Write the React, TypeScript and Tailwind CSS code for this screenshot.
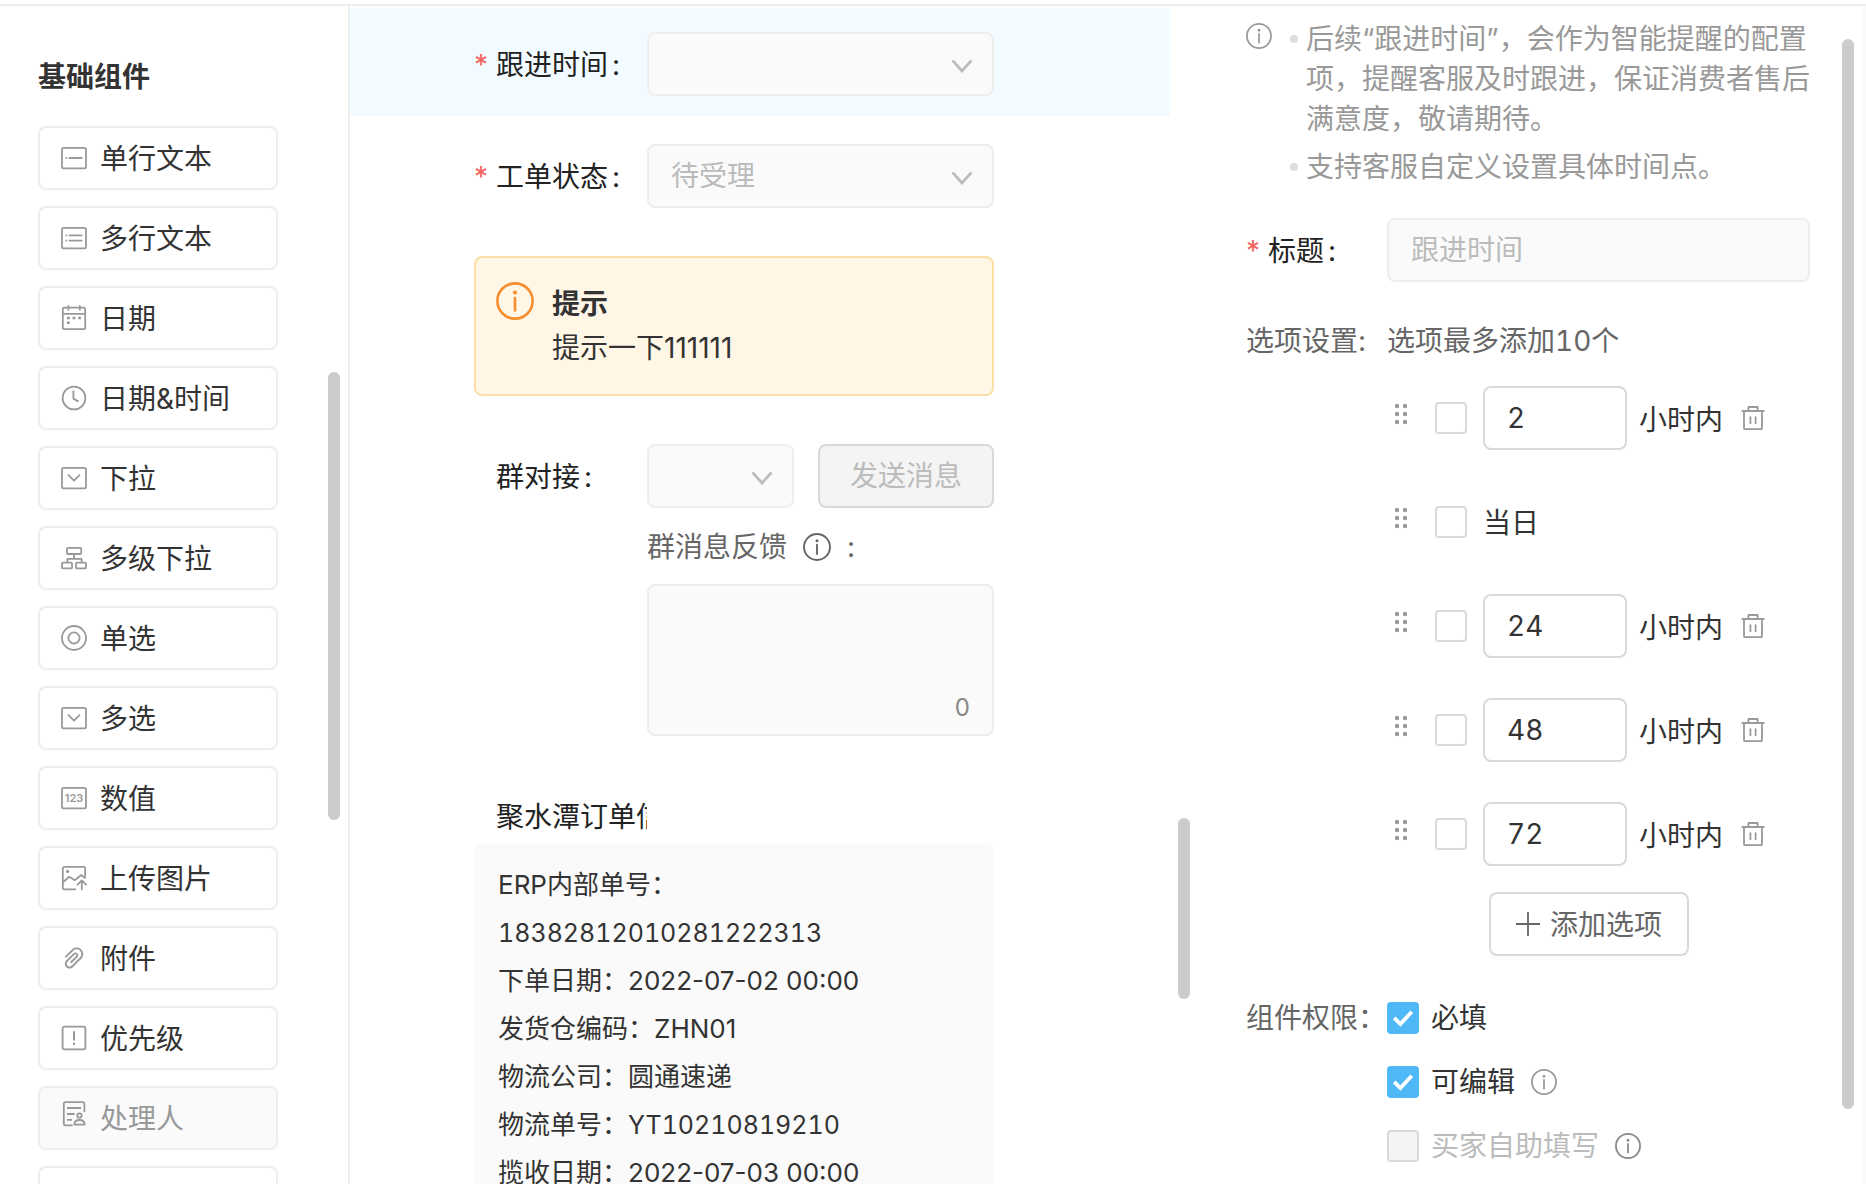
import React, { useState } from "react";
import { AiOutlinePaperClip } from "react-icons/ai";

interface WidgetItem {
    label: string;
    icon: React.ReactNode;
    disabled?: boolean;
}

interface TimeOption {
    id: string;
    hours: string | null;
    label: string;
}

interface OrderRow {
    name: string;
    value: string;
}

function Glyph({ children }: { children: React.ReactNode }) {
    return (
        <svg
            viewBox="0 0 28 28"
            className="h-7 w-7 shrink-0 overflow-visible text-[#999]"
            fill="none"
            stroke="currentColor"
            strokeWidth="1.8"
            strokeLinejoin="round"
            aria-hidden="true"
        >
            {children}
        </svg>
    );
}

const boxFrame = <rect x="2" y="3.8" width="24" height="20.6" rx="1.6" />;

const widgets: WidgetItem[] = [
    {
        label: "单行文本",
        icon: <Glyph>{boxFrame}<path d="M5.5 14H7M8.6 14H22.4" /></Glyph>,
    },
    {
        label: "多行文本",
        icon: <Glyph>{boxFrame}<path d="M5.5 11.4H7M8.6 11.4H22.4M5.5 16.6H7M8.6 16.6H22.4" /></Glyph>,
    },
    {
        label: "日期",
        icon: (
            <Glyph>
                <rect x="2.8" y="3.6" width="22.4" height="21.6" rx="1.6" />
                <path d="M2.8 9.8H25.2M8.4 1.2V6.4M19.8 1.2V6.4" />
                <path d="M7 14H9.8M12.6 14H15.4M18.2 14H21M7 18.8H9.8" strokeWidth="2.6" />
            </Glyph>
        ),
    },
    {
        label: "日期&时间",
        icon: <Glyph><circle cx="14" cy="14" r="11.4" /><path d="M13.4 6.6V14.6L18.6 17.6" /></Glyph>,
    },
    {
        label: "下拉",
        icon: <Glyph>{boxFrame}<path d="M8 10.6L14 16.6L20 10.6" /></Glyph>,
    },
    {
        label: "多级下拉",
        icon: (
            <Glyph>
                <rect x="7" y="3.8" width="14.2" height="6.2" rx="1" />
                <path d="M14 10V14.8M7.4 18.4V14.8H21.6V18.4" />
                <rect x="2" y="18.6" width="10" height="5.8" rx="1" />
                <rect x="16" y="18.6" width="10" height="5.8" rx="1" />
            </Glyph>
        ),
    },
    {
        label: "单选",
        icon: <Glyph><circle cx="14" cy="14" r="12" /><circle cx="14" cy="14" r="5.6" /></Glyph>,
    },
    {
        label: "多选",
        icon: <Glyph>{boxFrame}<path d="M8 10.6L14 16.6L20 10.6" /></Glyph>,
    },
    {
        label: "数值",
        icon: (
            <Glyph>
                {boxFrame}
                <text x="14" y="18" textAnchor="middle" fontSize="11" fontWeight="600" fill="currentColor" stroke="none">123</text>
            </Glyph>
        ),
    },
    {
        label: "上传图片",
        icon: (
            <Glyph>
                <path d="M16 25.4H4.6A1.8 1.8 0 0 1 2.8 23.6V4.6A1.8 1.8 0 0 1 4.6 2.8H23.4A1.8 1.8 0 0 1 25.2 4.6V14" />
                <path d="M3 18.2L9.2 12.8L14.8 16.2L21.2 11L25.2 14.2" />
                <circle cx="7.6" cy="7.4" r="1.6" fill="currentColor" stroke="none" />
                <path d="M21.8 26V16.6M17 21.2L21.8 16.4L26.6 21.2" />
            </Glyph>
        ),
    },
    { label: "附件", icon: <AiOutlinePaperClip className="h-7 w-7 shrink-0 text-[#999]" aria-hidden="true" /> },
    {
        label: "优先级",
        icon: (
            <Glyph>
                <rect x="2.6" y="2.6" width="22.8" height="22.8" rx="1.8" />
                <path d="M14 7.2V16.4M14 18.6V21" strokeWidth="2" />
            </Glyph>
        ),
    },
    {
        label: "处理人",
        disabled: true,
        icon: (
            <Glyph>
                <path d="M12.6 21.4H5.6A1.8 1.8 0 0 1 3.8 19.6V0A1.8 1.8 0 0 1 5.6 -1.8H22.6A1.8 1.8 0 0 1 24.4 0V8" />
                <path d="M7 4H21M7 10H14.6M7 15.8H12" />
                <circle cx="19.4" cy="11.6" r="2.2" />
                <path d="M14.4 20.6C14.4 17.6 16.2 16 19.4 16S24.6 17.6 24.6 20.6Z" />
            </Glyph>
        ),
    },
    { label: "提示", icon: <Glyph>{boxFrame}</Glyph> },
];

const orderRows: OrderRow[] = [
    { name: "ERP内部单号", value: "18382812010281222313" },
    { name: "下单日期", value: "2022-07-02 00:00" },
    { name: "发货仓编码", value: "ZHN01" },
    { name: "物流公司", value: "圆通速递" },
    { name: "物流单号", value: "YT10210819210" },
    { name: "揽收日期", value: "2022-07-03 00:00" },
];

const initialOptions: TimeOption[] = [
    { id: "h2", hours: "2", label: "小时内" },
    { id: "today", hours: null, label: "当日" },
    { id: "h24", hours: "24", label: "小时内" },
    { id: "h48", hours: "48", label: "小时内" },
    { id: "h72", hours: "72", label: "小时内" },
];

function orderValueClass(value: string) {
    if (/^\d{10,}$/.test(value)) return "w-full text-[25px] tabular-nums";
    if (value.startsWith("YT")) return "text-[25px] tabular-nums";
    return "";
}

function InfoIcon({ className }: { className: string }) {
    return (
        <svg viewBox="0 0 28 28" className={`shrink-0 ${className}`} fill="none" stroke="currentColor" strokeWidth="1.9" aria-hidden="true">
            <circle cx="14" cy="14" r="13" />
            <path d="M14 11.8V21" strokeLinecap="round" />
            <circle cx="14" cy="7.8" r="1.5" fill="currentColor" stroke="none" />
        </svg>
    );
}

function TrashIcon() {
    return (
        <svg viewBox="0 0 24 24" className="h-6 w-6" fill="none" stroke="currentColor" strokeWidth="1.8" strokeLinejoin="round" aria-hidden="true">
            <path d="M0.6 5H23.4M7.4 5V1H16.6V5M3 5V22A1.2 1.2 0 0 0 4.2 23.2H19.8A1.2 1.2 0 0 0 21 22V5" />
            <path d="M9.4 10.4V18M14.6 10.4V18" />
        </svg>
    );
}

function DragHandle() {
    return (
        <svg viewBox="0 0 12 20" className="mb-2 h-5 w-3 shrink-0 overflow-visible text-[#999]" fill="currentColor" aria-hidden="true">
            {[2, 10, 18].map((y) => (
                <g key={y}>
                    <circle cx="2" cy={y} r="2.2" />
                    <circle cx="10" cy={y} r="2.2" />
                </g>
            ))}
        </svg>
    );
}

function DisabledSelect({ id, text }: { id: string; text?: string }) {
    return (
        <div className="relative min-w-0 flex-1">
            <select
                id={id}
                disabled
                className="h-16 w-full appearance-none rounded-lg border-2 border-[#eee] bg-[#fafafa] pl-[22px] pr-14 text-[#bbb] opacity-100"
            >
                <option>{text ?? ""}</option>
            </select>
            <svg viewBox="0 0 22 14" className="pointer-events-none absolute right-[21px] top-[27px] h-3.5 w-[22px] text-[#bbb]" fill="none" stroke="currentColor" strokeWidth="2.8" strokeLinecap="round" aria-hidden="true">
                <path d="M2.4 2.4L11 12L19.6 2.4" />
            </svg>
        </div>
    );
}

function FieldLabel({ htmlFor, required, children }: { htmlFor: string; required?: boolean; children: React.ReactNode }) {
    return (
        <label htmlFor={htmlFor} className="flex shrink-0 whitespace-nowrap pt-0.5 text-[#222]">
            <span className="w-[22px] shrink-0 text-[#f5635d]">{required ? "*" : ""}</span>
            <span>{children}</span>
            <span className="ml-1">:</span>
        </label>
    );
}

function Checkbox({ id, checked, disabled, label, onChange }: { id: string; checked: boolean; disabled?: boolean; label?: string; onChange?: () => void }) {
    return (
        <span className="relative flex h-8 w-8 shrink-0">
            <input
                id={id}
                type="checkbox"
                checked={checked}
                disabled={disabled}
                aria-label={label}
                onChange={() => onChange?.()}
                className="peer h-8 w-8 appearance-none rounded border-2 border-[#d9d9d9] bg-white checked:border-[#4fb9f7] checked:bg-[#4fb9f7] disabled:bg-[#f4f4f4]"
            />
            <svg viewBox="0 0 32 32" className="pointer-events-none absolute inset-0 hidden text-white peer-checked:block" fill="none" stroke="currentColor" strokeWidth="3.8" aria-hidden="true">
                <path d="M7.2 15.8L13.4 22L24.8 9.8" />
            </svg>
        </span>
    );
}

function Sidebar() {
    return (
        <aside className="flex w-[350px] shrink-0 justify-between border-r-2 border-[#eee] pl-[38px] pr-2">
            <div className="w-60">
                <h2 className="pb-[29px] pt-[51px] font-bold leading-10 text-[#333]">基础组件</h2>
                <div className="flex flex-col gap-4">
                    {widgets.map((w) => (
                        <button
                            key={w.label}
                            type="button"
                            disabled={w.disabled}
                            className={`flex h-16 items-center gap-3 rounded-lg border-2 border-[#eee] pl-5 ${w.disabled ? "bg-[#fafafa] text-[#999]" : "bg-white text-[#333]"}`}
                        >
                            {w.icon}
                            <span className="pt-0.5">{w.label}</span>
                        </button>
                    ))}
                </div>
            </div>
            <div className="mt-[366px] h-[448px] w-3 rounded-full bg-[#ccc]" />
        </aside>
    );
}

function FormPreview() {
    return (
        <main className="flex min-w-0 flex-1 justify-between">
            <div className="min-w-0 flex-1 pt-0.5">
                <div className="bg-[#f2fbff] pb-5 pl-[124px] pr-44 pt-6">
                    <div className="flex items-center">
                        <div className="w-[173px] shrink-0"><FieldLabel htmlFor="followTime" required>跟进时间</FieldLabel></div>
                        <DisabledSelect id="followTime" />
                    </div>
                </div>

                <div className="pl-[124px] pr-44 pt-7">
                    <div className="flex items-center">
                        <div className="w-[173px] shrink-0"><FieldLabel htmlFor="ticketStatus" required>工单状态</FieldLabel></div>
                        <DisabledSelect id="ticketStatus" text="待受理" />
                    </div>

                    <div className="mt-12 flex h-[140px] gap-[18px] rounded-lg border-2 border-[#fcdfa6] bg-[#fff6e6] pl-5 pt-6 text-[#333]">
                        <InfoIcon className="h-[38px] w-[38px] text-[#f78d2c]" />
                        <div className="leading-[44px]">
                            <p className="font-bold">提示</p>
                            <p>提示一下111111</p>
                        </div>
                    </div>

                    <div className="mt-12 flex items-center">
                        <div className="w-[173px] shrink-0"><FieldLabel htmlFor="groupChat">群对接</FieldLabel></div>
                        <div className="flex min-w-0 flex-1 gap-6">
                            <DisabledSelect id="groupChat" />
                            <button type="button" disabled className="h-16 w-44 rounded-lg border-2 border-[#d9d9d9] bg-[#f4f4f4] text-[#bbb]">发送消息</button>
                        </div>
                    </div>

                    <div className="pl-[173px]">
                        <label htmlFor="groupFeedback" className="flex items-center pb-[17px] pt-[19px] leading-10 text-[#666]">
                            群消息反馈
                            <InfoIcon className="ml-4 mr-4 h-7 w-7" />
                            :
                        </label>
                        <div className="relative">
                            <textarea id="groupFeedback" disabled className="block h-[152px] w-full resize-none rounded-lg border-2 border-[#eee] bg-[#fafafa] p-5" />
                            <span className="absolute bottom-2 right-6 text-2xl leading-10 text-[#888]">0</span>
                        </div>
                    </div>

                    <h3 className="mt-[61px] w-[173px] overflow-hidden whitespace-nowrap pl-[22px] leading-10 text-[#222]">聚水潭订单信息</h3>
                    <dl className="mt-[7px] rounded-lg bg-[#fafafa] px-6 py-[17px] text-[26px] leading-[48px] text-[#333]">
                        {orderRows.map((row) => (
                            <div key={row.name} className="flex flex-wrap">
                                <dt>{row.name}：</dt>
                                <dd className={orderValueClass(row.value)}>{row.value}</dd>
                            </div>
                        ))}
                    </dl>
                </div>
            </div>
            <div className="ml-2 mt-[812px] h-[181px] w-3 shrink-0 rounded-full bg-[#ccc]" />
        </main>
    );
}

function SettingsPanel() {
    const [options, setOptions] = useState<TimeOption[]>(initialOptions);
    const [selected, setSelected] = useState<string[]>([]);
    const [required, setRequired] = useState(true);
    const [editable, setEditable] = useState(true);

    const toggle = (id: string) =>
        setSelected((prev) => (prev.includes(id) ? prev.filter((s) => s !== id) : [...prev, id]));

    return (
        <aside className="flex w-[676px] shrink-0 justify-between border-r-4 border-[#fafafa] pl-[56px] pr-2">
            <div className="w-[564px] pt-[13px]">
                {/* Notes */}
                <div className="flex text-[#999]">
                    <InfoIcon className="mt-1 h-[26px] w-[26px]" />
                    <ul className="ml-[18px] flex flex-col gap-2 leading-10">
                        <li className="flex gap-2">
                            <span className="mt-4 h-2 w-2 shrink-0 rounded-full bg-[#ddd]" />
                            <p className="w-[505px]">后续“跟进时间”，会作为智能提醒的配置项，提醒客服及时跟进，保证消费者售后满意度，敬请期待。</p>
                        </li>
                        <li className="flex gap-2">
                            <span className="mt-4 h-2 w-2 shrink-0 rounded-full bg-[#ddd]" />
                            <p>支持客服自定义设置具体时间点。</p>
                        </li>
                    </ul>
                </div>

                {/* Title */}
                <div className="mt-[31px] flex items-center">
                    <div className="w-[141px] shrink-0"><FieldLabel htmlFor="fieldTitle" required>标题</FieldLabel></div>
                    <input
                        id="fieldTitle"
                        type="text"
                        disabled
                        placeholder="跟进时间"
                        className="h-16 min-w-0 flex-1 rounded-lg border-2 border-[#eee] bg-[#fafafa] px-[22px] placeholder:text-[#bbb]"
                    />
                </div>

                {/* Options */}
                <div className="mt-[39px] flex leading-10 text-[#666]">
                    <span className="w-[141px] shrink-0">选项设置:</span>
                    <span className="tabular-nums">选项最多添加10个</span>
                </div>
                <div className="mt-[25px] flex flex-col gap-10 pl-[149px] text-[#333]">
                    {options.map((o) => (
                        <div key={o.id} className="flex h-16 items-center">
                            <DragHandle />
                            <span className="ml-7 mr-4 flex">
                                <Checkbox id={o.id} label={`${o.hours ?? ""}${o.label}`} checked={selected.includes(o.id)} onChange={() => toggle(o.id)} />
                            </span>
                            {o.hours !== null && (
                                <input
                                    type="text"
                                    aria-label="小时数"
                                    value={o.hours}
                                    onChange={(e) => setOptions(options.map((p) => (p.id === o.id ? { ...p, hours: e.target.value } : p)))}
                                    className="mr-3 h-16 w-36 rounded-lg border-2 border-[#d9d9d9] bg-white px-[22px] tabular-nums"
                                />
                            )}
                            <label htmlFor={o.id} className={o.hours !== null ? "pt-1" : "pt-0.5"}>{o.label}</label>
                            {o.hours !== null && (
                                <button
                                    type="button"
                                    aria-label="删除"
                                    onClick={() => setOptions(options.filter((p) => p.id !== o.id))}
                                    className="ml-[18px] text-[#999]"
                                >
                                    <TrashIcon />
                                </button>
                            )}
                        </div>
                    ))}
                </div>
                <button
                    type="button"
                    onClick={() => setOptions([...options, { id: `h${Date.now()}`, hours: "", label: "小时内" }])}
                    className="ml-[243px] mt-[26px] flex h-16 w-[200px] items-center justify-center gap-2.5 rounded-lg border-2 border-[#d9d9d9] bg-white text-[#666] shadow-[0_4px_0_rgba(0,0,0,0.015)]"
                >
                    <svg viewBox="0 0 24 24" className="h-6 w-6" fill="none" stroke="currentColor" strokeWidth="1.8" aria-hidden="true">
                        <path d="M12 0V24M0 12H24" />
                    </svg>
                    <span className="pt-0.5">添加选项</span>
                </button>

                {/* Permissions */}
                <div className="mt-[42px] flex leading-10 text-[#333]">
                    <span className="w-[141px] shrink-0 text-[#666]">组件权限：</span>
                    <div className="flex flex-col gap-6">
                        <div className="flex items-center gap-3">
                            <Checkbox id="permRequired" checked={required} onChange={() => setRequired(!required)} />
                            <label htmlFor="permRequired">必填</label>
                        </div>
                        <div className="flex items-center gap-3">
                            <Checkbox id="permEditable" checked={editable} onChange={() => setEditable(!editable)} />
                            <label htmlFor="permEditable">可编辑</label>
                            <InfoIcon className="ml-1 h-[26px] w-[26px] text-[#999]" />
                        </div>
                        <div className="flex items-center gap-3 text-[#bbb]">
                            <Checkbox id="permBuyer" checked={false} disabled />
                            <label htmlFor="permBuyer">买家自助填写</label>
                            <InfoIcon className="ml-1 h-[26px] w-[26px] text-[#888]" />
                        </div>
                    </div>
                </div>
            </div>
            <div className="mt-[33px] h-[1070px] w-3 rounded-full bg-[#ccc]" />
        </aside>
    );
}

export default function App() {
    return (
        <div className="flex h-screen flex-col overflow-hidden bg-white pt-1 font-['Inter','Noto_Sans_CJK_SC',sans-serif] text-[28px]">
            <div className="flex min-h-0 flex-1 overflow-hidden border-t-2 border-[#eee]">
                <Sidebar />
                <FormPreview />
                <SettingsPanel />
            </div>
        </div>
    );
}
